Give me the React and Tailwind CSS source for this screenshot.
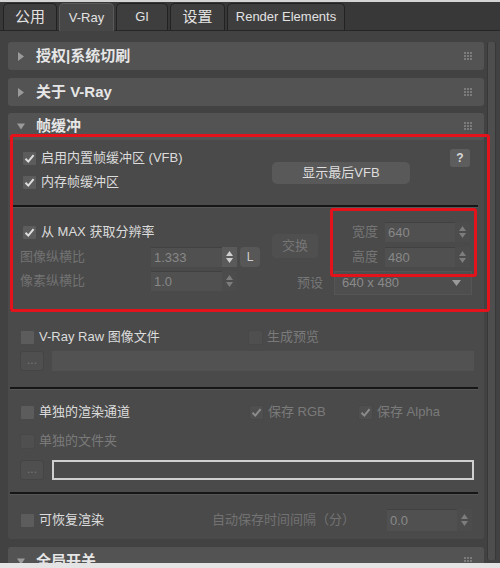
import React from 'react'

const FONT = { fontFamily: '"Liberation Sans", "Noto Sans CJK SC", sans-serif' }

function Grip() {
  return (
    <svg width="9" height="9" viewBox="0 0 9 9">
      {[0, 3, 6].map((x) =>
        [0, 3, 6].map((y) => <rect key={`${x}-${y}`} x={x} y={y} width="2" height="2" fill="#7c7c7c" />)
      )}
    </svg>
  )
}

function Header({ title, open = false, className = '' }) {
  return (
    <div className={`flex items-center shrink-0 pl-[9px] pr-[11px] bg-[#535353] rounded-[3px] ${className}`}>
      <svg width="8" height="9" viewBox="0 0 8 9" className="shrink-0">
        {open ? <path d="M0 1.5 L8 1.5 L4 7.5 Z" fill="#9a9a9a" /> : <path d="M1 0 L7 4.5 L1 9 Z" fill="#9a9a9a" />}
      </svg>
      <span className="ml-[11px] text-[15px] font-bold text-[#e6e6e6]">{title}</span>
      <span className="ml-auto"><Grip /></span>
    </div>
  )
}

function Check({ checked = false, disabled = false }) {
  return (
    <span className={`w-[15px] h-[15px] shrink-0 rounded-[2px] border flex items-center justify-center ${disabled ? 'bg-[#4f4f4f] border-[#484848]' : 'bg-[#5c5c5c] border-[#4a4a4a]'}`}>
      {checked && (
        <svg width="11" height="11" viewBox="0 0 11 11">
          <path d="M1.5 5.8 L4.3 8.6 L9.6 2.2" fill="none" stroke={disabled ? '#8c8c8c' : '#dedede'} strokeWidth="2" />
        </svg>
      )}
    </span>
  )
}

function CheckRow({ checked, disabled, children, className = '' }) {
  return (
    <div className={`flex items-center h-[20px] shrink-0 ${className}`}>
      <Check checked={checked} disabled={disabled} />
      <span className={`ml-[4px] text-[13px] whitespace-nowrap ${disabled ? 'text-[#7a7a7a]' : 'text-[#dcdcdc]'}`}>{children}</span>
    </div>
  )
}

function Arrows({ light = false }) {
  return (
    <div className={`w-[15px] h-full flex flex-col items-center justify-center gap-[2px] ${light ? 'bg-[#5a5a5a]' : 'bg-[#4c4c4c]'}`}>
      <svg width="7" height="5" viewBox="0 0 7 5"><path d="M0 5 L3.5 0 L7 5 Z" fill={light ? '#cfcfcf' : '#7d7d7d'} /></svg>
      <svg width="7" height="5" viewBox="0 0 7 5"><path d="M0 0 L7 0 L3.5 5 Z" fill={light ? '#cfcfcf' : '#7d7d7d'} /></svg>
    </div>
  )
}

function Spinner({ value, width = 'w-[86px]', light = false, h = 'h-[20px]' }) {
  return (
    <div className={`flex ${width} ${h} shrink-0`}>
      <div className="flex-1 flex items-center pl-[3px] bg-[#505050] border-t border-[#414141] text-[13px] text-[#888]">{value}</div>
      <Arrows light={light} />
    </div>
  )
}

function Separator() {
  return (
    <div className="ml-[2px] mr-[6px] shrink-0">
      <div className="h-[2px] bg-[#161616]" />
      <div className="h-[1px] bg-[#565656]" />
    </div>
  )
}

function PathRow({ bordered = false }) {
  return (
    <div className="flex items-center h-[20px] pl-[12px]">
      <div className="w-[24px] h-[20px] rounded-[3px] bg-[#4f4f4f] border border-[#454545] flex items-center justify-center text-[12px] text-[#777] leading-none pb-[3px]">...</div>
      <div className={`ml-[8px] w-[422px] h-[20px] ${bordered ? 'border-2 border-[#cfcfcf] bg-[#4a4a4a]' : 'bg-[#525252]'}`} />
    </div>
  )
}

export default function App() {
  return (
    <div className="w-[500px] h-[568px] flex flex-col bg-[#424242] overflow-hidden relative" style={FONT}>
      <div className="h-[2px] shrink-0 bg-[#d4d4d4]" />
      {/* tabs */}
      <div className="h-[29px] shrink-0 bg-[#383838] flex items-end pl-[3px] gap-[2px] border-b border-[#262626]">
        {[
          ['公用', 'w-[54px]', false],
          ['V-Ray', 'w-[55px]', true],
          ['GI', 'w-[52px]', false],
          ['设置', 'w-[55px]', false],
          ['Render Elements', 'w-[118px]', false],
        ].map(([t, w, active]) => (
          <div
            key={t}
            className={`${w} flex items-center justify-center rounded-t-[5px] border border-b-0 ${active ? 'bg-[#474747] border-[#5a5a5a] -mb-[1px] h-[28px]' : 'bg-[#3e3e3e] border-[#222] h-[27px]'} text-[#e2e2e2] ${/[\u4e00-\u9fff]/.test(t) ? 'text-[15px]' : 'text-[13px]'}`}
          >
            {t}
          </div>
        ))}
      </div>

      {/* content */}
      <div className="flex-1 flex pt-[11px] min-h-0">
        <div className="ml-[8px] w-[476px] flex flex-col">
          <Header title="授权|系统切刷" className="h-[28px]" />
          <Header title="关于 V-Ray" className="mt-[8px] h-[28px]" />
          <div className="mt-[7px] shrink-0 bg-[#4a4a4a] rounded-[3px] flex flex-col">
            <Header title="帧缓冲" open className="h-[27px]" />

            {/* section 1 */}
            <div className="flex shrink-0 h-[65px] pt-[8px]">
              <div className="flex flex-col gap-[4px] pl-[14px] w-[264px]">
                <CheckRow checked>启用内置帧缓冲区 (VFB)</CheckRow>
                <CheckRow checked>内存帧缓冲区</CheckRow>
              </div>
              <div className="mt-[14px] w-[138px] h-[22px] rounded-[5px] bg-[#595959] flex items-center justify-center text-[13px] text-[#dedede]">显示最后VFB</div>
              <div className="ml-[40px] mt-[1px] w-[20px] h-[18px] rounded-[3px] bg-[#5d5d5d] flex items-center justify-center text-[12px] font-bold text-[#d8d8d8]">?</div>
            </div>
            <Separator />

            {/* section 2 */}
            <div className="flex shrink-0 h-[101px] pt-[14px]">
              <div className="flex flex-col pl-[12px] w-[264px]">
                <CheckRow checked className="pl-[2px]">从 MAX 获取分辨率</CheckRow>
                <div className="flex items-center mt-[5px] h-[20px]">
                  <span className="w-[131px] text-[13px] text-[#727272]">图像纵横比</span>
                  <Spinner value="1.333" light />
                  <div className="ml-[3px] w-[20px] h-[20px] rounded-[4px] bg-[#575757] flex items-center justify-center text-[12px] text-[#d0d0d0]">L</div>
                </div>
                <div className="flex items-center mt-[4px] h-[20px]">
                  <span className="w-[131px] text-[13px] text-[#727272]">像素纵横比</span>
                  <Spinner value="1.0" />
                </div>
              </div>
              <div className="flex flex-col w-[62px]">
                <div className="mt-[12px] w-[46px] h-[24px] rounded-[4px] bg-[#4f4f4f] flex items-center justify-center text-[13px] text-[#767676]">交换</div>
                <div className="mt-[13px] h-[24px] flex items-center justify-end pr-[11px] text-[13px] text-[#767676]">预设</div>
              </div>
              <div className="flex flex-col w-[138px]">
                <div className="flex items-center h-[20px]">
                  <span className="ml-[18px] w-[33px] text-[13px] text-[#767676]">宽度</span>
                  <Spinner value="640" width="w-[85px]" />
                </div>
                <div className="flex items-center h-[20px] mt-[5px]">
                  <span className="ml-[18px] w-[33px] text-[13px] text-[#767676]">高度</span>
                  <Spinner value="480" width="w-[85px]" />
                </div>
                <div className="mt-[4px] h-[24px] bg-[#4e4e4e] border border-[#555] flex items-center pl-[7px] pr-[10px] text-[13px] text-[#8a8a8a]">
                  640 x 480
                  <svg width="9" height="6" viewBox="0 0 9 6" className="ml-auto"><path d="M0 0 L9 0 L4.5 6 Z" fill="#9a9a9a" /></svg>
                </div>
              </div>
            </div>
            <Separator />

            {/* section 3 */}
            <div className="flex flex-col shrink-0 h-[75px] pt-[15px]">
              <div className="flex">
                <CheckRow className="pl-[12px] w-[240px]">V-Ray Raw 图像文件</CheckRow>
                <CheckRow disabled>生成预览</CheckRow>
              </div>
              <div className="mt-[4px]"><PathRow /></div>
            </div>
            <Separator />

            {/* section 4 */}
            <div className="flex flex-col shrink-0 h-[102px] pt-[12px]">
              <div className="flex">
                <CheckRow className="pl-[12px] w-[241px]">单独的渲染通道</CheckRow>
                <CheckRow checked disabled className="w-[109px]">保存 RGB</CheckRow>
                <CheckRow checked disabled>保存 Alpha</CheckRow>
              </div>
              <CheckRow disabled className="pl-[12px] mt-[9px]">单独的文件夹</CheckRow>
              <div className="mt-[9px]"><PathRow bordered /></div>
            </div>
            <Separator />

            {/* section 5 */}
            <div className="flex items-center shrink-0 h-[44px] pt-[6px]">
              <CheckRow className="pl-[12px] w-[204px]">可恢复渲染</CheckRow>
              <span className="w-[175px] text-[13px] text-[#727272]">自动保存时间间隔（分）</span>
              <Spinner value="0.0" width="w-[85px]" h="h-[22px]" />
            </div>
          </div>
          <Header title="全局开关" open className="mt-[8px] h-[28px]" />
        </div>
        <div className="ml-[3px] w-[9px] h-[518px] shrink-0 bg-[#4e4e4e] border-x border-[#383838] rounded-[2px]" />
      </div>
      <div className="h-[5px] shrink-0 bg-[#e4e4e4]" />

      {/* annotations */}
      <div className="absolute left-[10px] top-[134px] w-[480px] h-[178px] border-[3px] border-[#e3121b] rounded-[3px] pointer-events-none" />
      <div className="absolute left-[330px] top-[208px] w-[147px] h-[69px] border-[3px] border-[#e3121b] rounded-[3px] pointer-events-none" />
    </div>
  )
}
